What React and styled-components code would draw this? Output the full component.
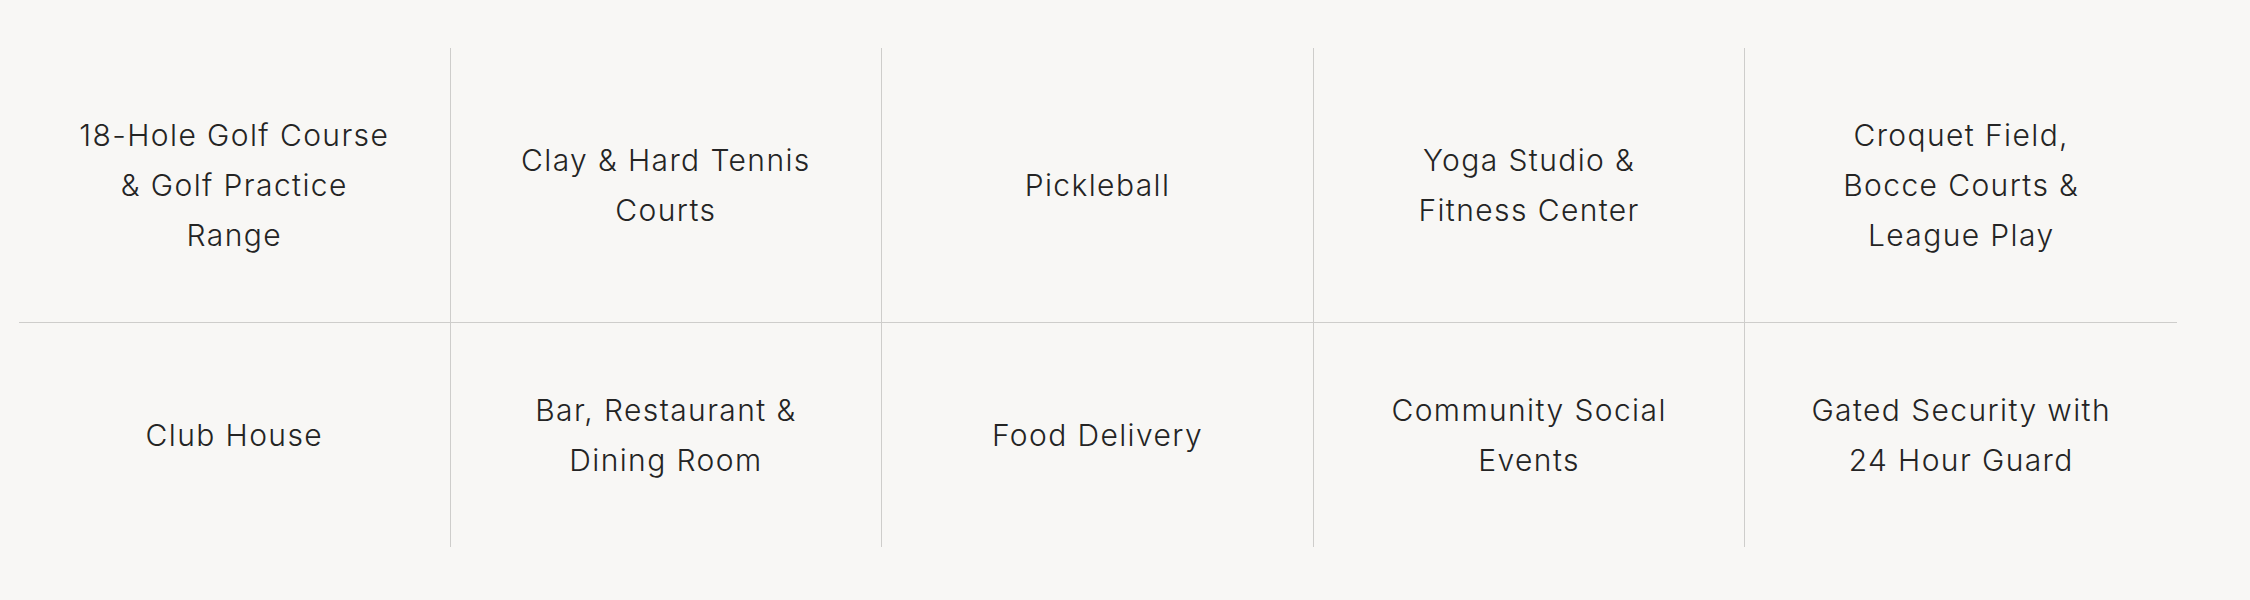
import React from "react";
import styled, { createGlobalStyle } from "styled-components";

const Global = createGlobalStyle`
  html, body {
    margin: 0;
    padding: 0;
    background: #f8f7f5;
  }
  body {
    font-family: Inter, "Open Sans", "Liberation Sans", sans-serif;
  }
`;

const Page = styled.div`
  padding: 48px 73px 54px 19px;
  background: #f8f7f5;
`;

const Grid = styled.div`
  display: grid;
  grid-template-columns: repeat(5, 1fr);
`;

const Cell = styled.div`
  display: flex;
  align-items: center;
  justify-content: center;
  padding: 62px 20px;
  text-align: center;
  border-right: ${(p) => (p.$last ? "none" : "1px solid #cecdcb")};
  border-bottom: ${(p) => (p.$top ? "1px solid #cecdcb" : "none")};
`;

const Label = styled.div`
  font-family: Inter, "Open Sans", "Liberation Sans", sans-serif;
  font-weight: 300;
  font-size: 30px;
  line-height: 50px;
  letter-spacing: 1.4px;
  color: #242424;
`;

const items = [
  ["18-Hole Golf Course", "& Golf Practice", "Range"],
  ["Clay & Hard Tennis", "Courts"],
  ["Pickleball"],
  ["Yoga Studio &", "Fitness Center"],
  ["Croquet Field,", "Bocce Courts &", "League Play"],
  ["Club House"],
  ["Bar, Restaurant &", "Dining Room"],
  ["Food Delivery"],
  ["Community Social", "Events"],
  ["Gated Security with", "24 Hour Guard"],
];

export default function App() {
  return (
    <>
      <Global />
      <Page>
        <Grid>
          {items.map((lines, i) => (
            <Cell key={i} $last={i % 5 === 4} $top={i < 5}>
              <Label>
                {lines.map((l, j) => (
                  <React.Fragment key={j}>
                    {j > 0 && <br />}
                    {l}
                  </React.Fragment>
                ))}
              </Label>
            </Cell>
          ))}
        </Grid>
      </Page>
    </>
  );
}
